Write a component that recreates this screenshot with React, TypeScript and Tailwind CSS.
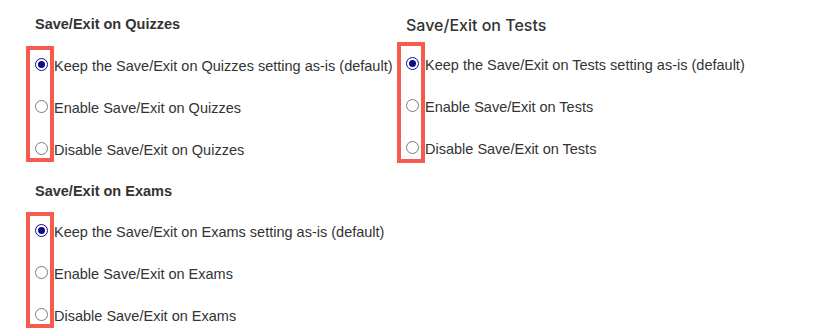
import React from "react";

type Opt = { label: string; checked?: boolean };

const Radio = ({ checked }: { checked?: boolean }) =>
  checked ? (
    <span className="flex h-[13px] w-[13px] shrink-0 items-center justify-center rounded-full border-[1.5px] border-[#0b0b85] bg-white">
      <span className="h-[7px] w-[7px] rounded-full bg-[#0b0b85]" />
    </span>
  ) : (
    <span className="h-[13px] w-[13px] shrink-0 rounded-full border border-[#7a7a7a] bg-white" />
  );

const Options = ({ options, boxClass }: { options: Opt[]; boxClass: string }) => (
  <div className={`relative flex flex-col gap-[26px] pl-[8.5px] ${boxClass}`}>
    {options.map((o) => (
      <label key={o.label} className="flex items-start gap-[6.5px] text-[14.5px] leading-[16px] text-[#333333]">
        <Radio checked={o.checked} />
        <span className="whitespace-nowrap">{o.label}</span>
      </label>
    ))}
    {/* annotation box drawn over the radio column */}
    <div className="pointer-events-none absolute inset-y-0 left-0 w-[28px] border-4 border-[#f65c4e]" />
  </div>
);

const opts = (what: string): Opt[] => [
  { label: `Keep the Save/Exit on ${what} setting as-is (default)`, checked: true },
  { label: `Enable Save/Exit on ${what}` },
  { label: `Disable Save/Exit on ${what}` },
];

export default function App() {
  return (
    <div
      className="grid h-[336px] w-[835px] grid-cols-[371px_1fr] bg-white pl-[26px]"
      style={{ fontFamily: '"Liberation Sans", Arial, sans-serif' }}
    >
      <div className="flex flex-col pt-[15.5px]">
        <h3 className="pl-[9px] text-[14.5px] font-bold leading-[17px] text-[#333333]">Save/Exit on Quizzes</h3>
        <Options options={opts("Quizzes")} boxClass="mt-[13.5px] pt-[12px] pb-[3.5px]" />

        <h3 className="mt-[21px] pl-[9px] text-[14.5px] font-bold leading-[17px] text-[#333333]">Save/Exit on Exams</h3>
        <Options options={opts("Exams")} boxClass="mt-[12px] pt-[12.5px] pb-[3.5px]" />
      </div>

      <div className="flex flex-col pt-[14.5px]">
        <h3
          className="pl-[9px] text-[16px] font-medium leading-[20px] text-[#333333]"
          style={{ fontFamily: "Inter, sans-serif" }}
        >
          Save/Exit on Tests
        </h3>
        <Options options={opts("Tests")} boxClass="mt-[7.5px] pt-[14.5px] pb-[6.5px]" />
      </div>
    </div>
  );
}
